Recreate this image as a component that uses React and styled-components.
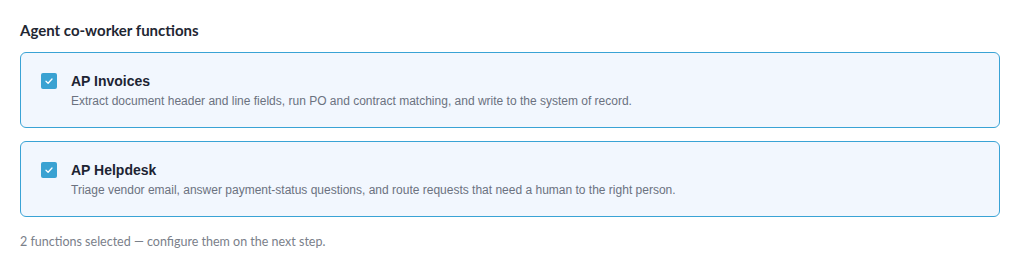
import styled, { createGlobalStyle } from "styled-components";

const GlobalStyle = createGlobalStyle`
  body {
    margin: 0;
    background: #ffffff;
  }
`;

const functions = [
  {
    name: "AP Invoices",
    text: "Extract document header and line fields, run PO and contract matching, and write to the system of record.",
  },
  {
    name: "AP Helpdesk",
    text: "Triage vendor email, answer payment-status questions, and route requests that need a human to the right person.",
  },
];

export default function App() {
  return (
    <>
      <GlobalStyle />
      <Page>
        <Heading>Agent co-worker functions</Heading>
        <List>
          {functions.map((item) => (
            <Card key={item.name}>
              <Check>
                <svg width="10" height="10" viewBox="0 0 10 10">
                  <path d="M2 5.2 L4.1 7.2 L8 3" fill="none" stroke="#ffffff" strokeWidth="1.3" strokeLinecap="round" strokeLinejoin="round" />
                </svg>
              </Check>
              <Body>
                <Title>{item.name}</Title>
                <Desc>{item.text}</Desc>
              </Body>
            </Card>
          ))}
        </List>
        <Footer>{functions.length} functions selected — configure them on the next step.</Footer>
      </Page>
    </>
  );
}

const Page = styled.div`
  padding: 21px 30px 0 20px;
`;

const Heading = styled.h2`
  margin: 0 0 13px;
  font-family: Lato, "Noto Sans", sans-serif;
  font-size: 15px;
  font-weight: 700;
  line-height: 18px;
  color: #1f2733;
`;

const List = styled.div`
  display: flex;
  flex-direction: column;
  gap: 13px;
`;

const Card = styled.div`
  display: flex;
  align-items: flex-start;
  gap: 14px;
  height: 76px;
  box-sizing: border-box;
  padding: 20px 20px 0 20px;
  background: #f2f7fe;
  border: 1px solid #3aa3d5;
  border-radius: 6px;
`;

const Check = styled.span`
  flex: none;
  display: flex;
  align-items: center;
  justify-content: center;
  width: 16px;
  height: 16px;
  border-radius: 2px;
  background: #3aa2d2;
`;

const Body = styled.div`
  display: flex;
  flex-direction: column;
  gap: 4px;
`;

const Title = styled.div`
  font-family: "Liberation Sans", Arial, sans-serif;
  font-size: 14px;
  font-weight: 700;
  line-height: 16px;
  color: #1d2433;
`;

const Desc = styled.div`
  font-family: "Liberation Sans", Arial, sans-serif;
  font-size: 12px;
  line-height: 16px;
  color: #6b7280;
`;

const Footer = styled.p`
  margin: 17px 0 0;
  font-family: Lato, "Noto Sans", sans-serif;
  font-size: 12.5px;
  line-height: 16px;
  color: #7a808a;
`;
